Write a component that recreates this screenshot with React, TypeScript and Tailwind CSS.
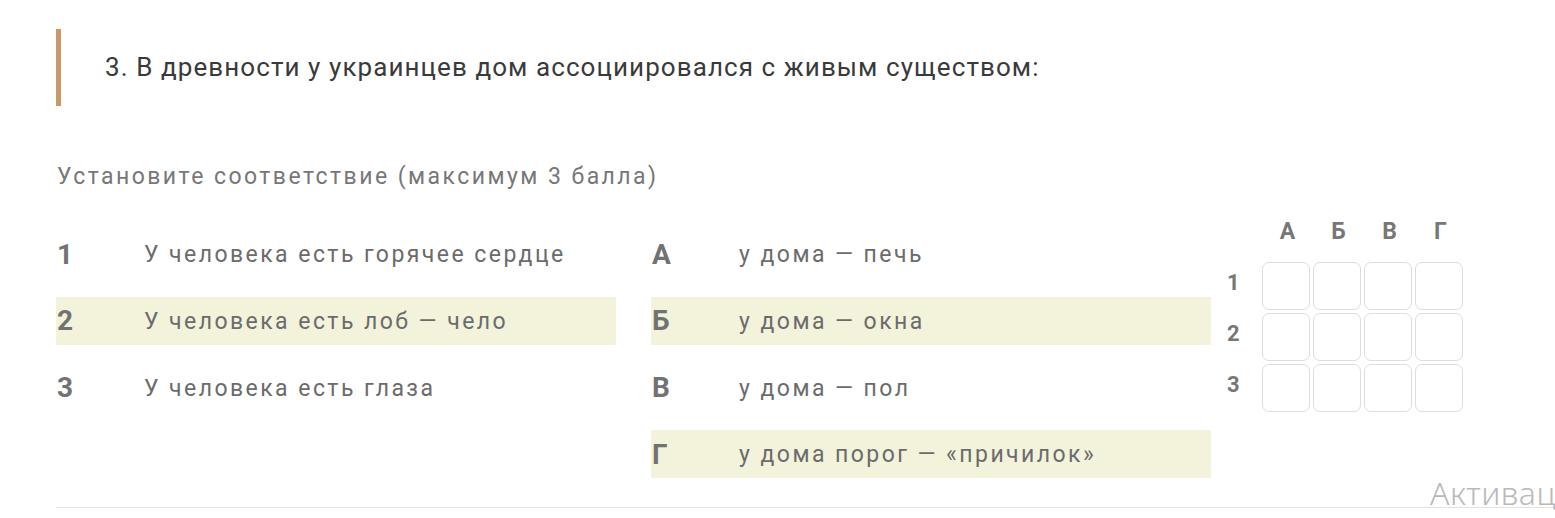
import React from "react";

const left = [
  { n: "1", t: "У человека есть горячее сердце", hl: false },
  { n: "2", t: "У человека есть лоб — чело", hl: true },
  { n: "3", t: "У человека есть глаза", hl: false },
];
const right = [
  { n: "А", t: "у дома — печь", hl: false },
  { n: "Б", t: "у дома — окна", hl: true },
  { n: "В", t: "у дома — пол", hl: false },
  { n: "Г", t: "у дома порог — «причилок»", hl: true },
];

function Row({ n, t, hl }: { n: string; t: string; hl: boolean }) {
  return (
    <div className={`flex items-center h-[48px] ${hl ? "bg-[#f3f3dc]" : ""}`}>
      <div className="w-[88px] shrink-0 pl-[1px] pt-[1px] text-[28px] font-bold text-[#727272]">{n}</div>
      <div className="pt-[3px] text-[23px] tracking-[2.45px] text-[#6b6b6b] whitespace-nowrap">{t}</div>
    </div>
  );
}

export default function App() {
  return (
    <div className="relative w-[1555px] h-[518px] overflow-hidden bg-white font-['Roboto',sans-serif]">
      <div className="pl-[56px] pt-[29px]">
        <div className="flex items-center h-[77px] border-l-[5px] border-[#c9996a]">
          <div className="pl-[44px] text-[26px] tracking-[1.08px] text-[#3a3a3a] leading-none pb-[2px] whitespace-nowrap">
            3. В древности у украинцев дом ассоциировался с живым существом:
          </div>
        </div>
        <div className="mt-[58px] pl-[1px] text-[23px] tracking-[2.45px] text-[#777777] leading-[26px] whitespace-nowrap">
          Установите соответствие (максимум 3 балла)
        </div>
        <div className="flex mt-[40px]">
          <div className="w-[560px] flex flex-col gap-[18.7px]">
            {left.map((r) => (
              <Row key={r.n} {...r} />
            ))}
          </div>
          <div className="w-[560px] ml-[35px] flex flex-col gap-[18.7px]">
            {right.map((r) => (
              <Row key={r.n} {...r} />
            ))}
          </div>
          <div className="ml-[16px] -mt-[14px]">
            <div className="flex pl-[35px] h-[31px] items-center">
              {["А", "Б", "В", "Г"].map((l) => (
                <div key={l} className="w-[51px] text-center text-[23px] font-bold text-[#777777] leading-none">
                  {l}
                </div>
              ))}
            </div>
            <div className="mt-[15px] flex flex-col gap-[3px]">
              {["1", "2", "3"].map((r) => (
                <div key={r} className="flex items-center">
                  <div className="w-[35px] text-[22px] font-bold text-[#777777] pb-[7px] leading-none">{r}</div>
                  <div className="flex gap-[3px]">
                    {[0, 1, 2, 3].map((c) => (
                      <div key={c} className="w-[48px] h-[48px] rounded-[7px] border border-[#dddddd]" />
                    ))}
                  </div>
                </div>
              ))}
            </div>
          </div>
        </div>
      </div>
      <div className="absolute left-[56px] right-0 top-[507px] h-[1px] bg-[#e2e2e2]" />
      <div className="absolute left-[1430px] top-[477px] whitespace-nowrap text-[32px] tracking-[0.5px] text-[#b9b9b9] font-['Noto_Sans',sans-serif] font-light leading-none">
        Активация Windows
      </div>
    </div>
  );
}
